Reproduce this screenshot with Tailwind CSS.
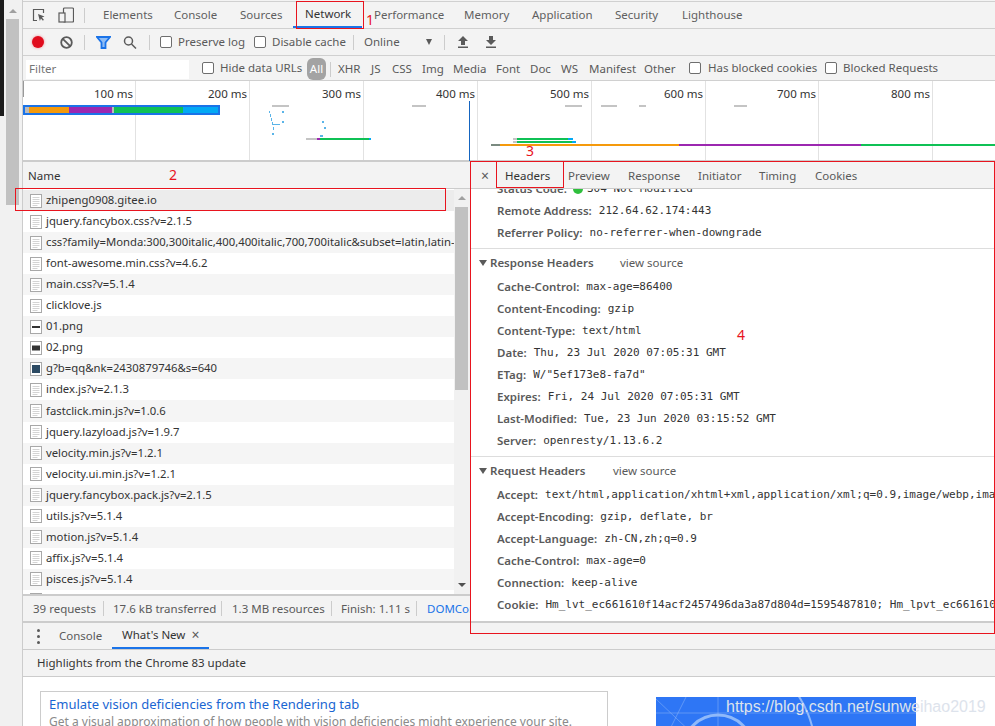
<!DOCTYPE html>
<html lang="en">
<head>
  <meta charset="UTF-8" />
  <title>DevTools Network</title>
  <script src="https://cdn.jsdelivr.net/npm/@tailwindcss/browser@4"></script>
</head>
<body class="bg-[#f3f3f3] font-['Noto_Sans',sans-serif] text-[11.5px] text-[#5a5a5a]">
<div class="relative flex h-[726px] w-[995px] overflow-hidden">

  <!-- page behind devtools -->
  <div class="relative flex w-[22px] shrink-0 bg-[#f1f1f1]">
    <div class="h-[116px] w-[4px] bg-[#1c1c1c]"></div>
    <div class="ml-[2px] flex w-[13px] flex-col items-center">
      <div class="mt-[9px] h-0 w-0 border-x-[4px] border-b-[4px] border-x-transparent border-b-[#a0a0a0]"></div>
      <div class="mt-[6px] h-[186px] w-[13px] bg-[#c1c1c1]"></div>
    </div>
  </div>

  <div class="flex w-[973px] flex-col border-l border-[#ccc]">
    <!-- main tabs -->
    <div class="mt-[1px] flex h-[28px] shrink-0 items-center border-y border-[#d0d0d0] text-[#5f5f5f]">
      <svg class="ml-[9px] h-[14px] w-[14px] shrink-0" viewBox="0 0 14 14" fill="none" stroke="#5a5a5a" stroke-width="1.2"><path d="M5 12.5H1.5V1.5h10V5"/><path d="M6 6l6.5 2.6-2.6 1 2 2.2-1 .9-2-2.2-1 2.6z" fill="#5a5a5a" stroke="none"/></svg>
      <svg class="ml-[12px] h-[16px] w-[16px] shrink-0" viewBox="0 0 16 16" fill="none" stroke="#5a5a5a" stroke-width="1.2"><rect x="5.5" y="1" width="10" height="14" rx="1"/><rect x="1" y="6" width="6" height="9" fill="#f3f3f3"/></svg>
      <div class="ml-[10px] mr-[6px] h-[15px] w-px shrink-0 bg-[#ccc]"></div>
      <div class="flex h-full items-center">
        <span class="ml-[12px] w-[71px]">Elements</span>
        <span class="w-[66px]">Console</span>
        <span class="w-[53px]">Sources</span>
        <span class="mr-[12px] flex h-full w-[69px] items-center border-b-2 border-[#1a73e8] pl-[12px] text-[#333]">Network</span>
        <span class="w-[90px]">Performance</span>
        <span class="w-[68px]">Memory</span>
        <span class="w-[83px]">Application</span>
        <span class="w-[67px]">Security</span>
        <span>Lighthouse</span>
      </div>
    </div>

    <!-- record row -->
    <div class="flex h-[27px] shrink-0 items-center border-b border-[#d0d0d0]">
      <div class="ml-[9px] h-[12px] w-[12px] shrink-0 rounded-full bg-[#e00b1c] shadow-[0_0_3px_#f08a90]"></div>
      <svg class="ml-[16px] h-[13px] w-[13px] shrink-0" viewBox="0 0 13 13" fill="none" stroke="#5a5a5a" stroke-width="1.8"><circle cx="6.5" cy="6.5" r="5.3"/><path d="M2.8 2.8l7.4 7.4"/></svg>
      <div class="ml-[11px] h-[15px] w-px bg-[#ccc]"></div>
      <svg class="ml-[11px] h-[13px] w-[15px] shrink-0" viewBox="0 0 15 13" fill="none" stroke="#1a73e8" stroke-width="1.8"><path d="M1 1h13L9.5 6.5V12h-4V6.5z" fill="#8fbdf5"/></svg>
      <svg class="ml-[12px] h-[13px] w-[14px] shrink-0" viewBox="0 0 14 13" fill="none" stroke="#5a5a5a" stroke-width="1.5"><circle cx="5.5" cy="5" r="4"/><path d="M8.5 8l4.5 4.5"/></svg>
      <div class="ml-[12px] h-[15px] w-px bg-[#ccc]"></div>
      <label class="ml-[10px] flex items-center"><span class="h-[12px] w-[12px] rounded-[2px] border border-[#6e6e6e] bg-white"></span><span class="ml-[6px] w-[76px]">Preserve log</span></label>
      <span class="h-[12px] w-[12px] rounded-[2px] border border-[#6e6e6e] bg-white"></span><span class="ml-[6px] w-[81px]">Disable cache</span>
      <div class="h-[15px] w-px bg-[#ccc]"></div>
      <span class="ml-[10px] w-[62px]">Online</span>
      <div class="h-0 w-0 border-x-[3.5px] border-t-[6px] border-x-transparent border-t-[#5a5a5a]"></div>
      <div class="ml-[12px] h-[15px] w-px bg-[#ccc]"></div>
      <svg class="ml-[12px] h-[12px] w-[12px] shrink-0" viewBox="0 0 12 12" fill="#5a5a5a"><path d="M6 0l5 5H8v4H4V5H1zM1 10.5h10V12H1z"/></svg>
      <svg class="ml-[16px] h-[12px] w-[12px] shrink-0" viewBox="0 0 12 12" fill="#5a5a5a"><path d="M4 0h4v4h3L6 9 1 4h3zM1 10.5h10V12H1z"/></svg>
    </div>

    <!-- filter row -->
    <div class="flex h-[25px] shrink-0 items-center border-b border-[#d0d0d0] pt-[2px]">
      <div class="ml-[3px] flex h-[19px] w-[163px] items-center bg-white pl-[3px] text-[#757575]">Filter</div>
      <span class="ml-[13px] mt-[-3px] h-[12px] w-[12px] rounded-[2px] border border-[#6e6e6e] bg-white"></span><span class="ml-[6px] mt-[-3px] w-[87px]">Hide data URLs</span>
      <span class="flex h-[22px] w-[19px] items-center justify-center rounded-[6px] bg-[#a3a3a3] text-white">All</span>
      <div class="ml-[4px] mr-[7px] h-[15px] w-px bg-[#ccc]"></div>
      <span class="w-[33px]">XHR</span><span class="w-[21px]">JS</span><span class="w-[30px]">CSS</span><span class="w-[31px]">Img</span><span class="w-[43px]">Media</span><span class="w-[34px]">Font</span><span class="w-[31px]">Doc</span><span class="w-[28px]">WS</span><span class="w-[55px]">Manifest</span><span class="w-[45px]">Other</span>
      <span class="mt-[-3px] h-[12px] w-[12px] rounded-[2px] border border-[#6e6e6e] bg-white"></span><span class="ml-[7px] mt-[-3px] w-[117px]">Has blocked cookies</span>
      <span class="mt-[-3px] h-[12px] w-[12px] rounded-[2px] border border-[#6e6e6e] bg-white"></span><span class="ml-[6px] mt-[-3px]">Blocked Requests</span>
    </div>

    <!-- overview, a canvas of timings -->
    <div class="relative h-[81px] shrink-0 border-b-2 border-[#ccc] bg-white text-[#333]">
      <div id="ticks"></div>
      <div class="absolute left-0 top-0 h-[16px] w-px bg-[#999]"></div>
      <div class="absolute left-0 top-[24px] flex h-[10px] w-[197px] border-2 border-[#1a73e8]">
        <i class="w-[4px] bg-[#bbb]"></i><i class="w-[40px] bg-[#f59a0c]"></i><i class="w-[43px] bg-[#9c27b0]"></i><i class="w-[2px] bg-[#bbb]"></i><i class="w-[69px] bg-[#0fc155]"></i><i class="flex-1 bg-[#03a9f4]"></i>
      </div>
      <div id="marks"></div>
      <div class="absolute left-[446px] top-[20px] h-[60px] w-px bg-[#1565c0]"></div>
    </div>

    <!-- split -->
    <div class="flex h-[461px] shrink-0 border-b-2 border-[#ccc]">
      <div class="flex w-[447px] shrink-0 flex-col">
        <div class="flex h-[27px] shrink-0 items-center border-b border-[#ccc] bg-[#f3f3f3] pl-[5px] pt-[2px] text-[#333]">Name</div>
        <div class="flex min-h-0 flex-1 bg-white">
          <div id="rows" class="h-full w-[431px] overflow-hidden pt-[1px] text-[11.3px] text-[#333]"></div>
          <div class="relative w-[16px] bg-[#f1f1f1]">
            <div class="absolute left-[4px] top-[7px] h-0 w-0 border-x-[4px] border-b-[4px] border-x-transparent border-b-[#a0a0a0]"></div>
            <div class="absolute left-[1px] top-[18px] h-[183px] w-[13px] bg-[#c1c1c1]"></div>
            <div class="absolute bottom-[7px] left-[4px] h-0 w-0 border-x-[4px] border-t-[4px] border-x-transparent border-t-[#505050]"></div>
          </div>
        </div>
        <div class="flex h-[27px] shrink-0 items-center overflow-hidden border-t-2 border-[#ccc] whitespace-nowrap">
          <span class="ml-[10px] w-[70px] shrink-0">39 requests</span><i class="h-[15px] w-px shrink-0 bg-[#ccc]"></i>
          <span class="ml-[9px] w-[108px] shrink-0">17.6 kB transferred</span><i class="h-[15px] w-px shrink-0 bg-[#ccc]"></i>
          <span class="ml-[10px] w-[99px] shrink-0">1.3 MB resources</span><i class="h-[15px] w-px shrink-0 bg-[#ccc]"></i>
          <span class="ml-[9px] w-[75px] shrink-0">Finish: 1.11 s</span><i class="h-[15px] w-px shrink-0 bg-[#ccc]"></i>
          <span class="ml-[10px] shrink-0 text-[#1a73e8]">DOMContentLoaded</span>
        </div>
      </div>

      <div class="flex min-w-0 flex-1 flex-col border-l border-[#ccc]">
        <div class="relative z-10 flex h-[27px] shrink-0 items-center border-b border-[#ccc] bg-[#f3f3f3] pt-[2px]">
          <span class="ml-[10px] w-[24px] text-[14px] leading-none">×</span>
          <span class="w-[63px] text-[#333]">Headers</span>
          <span class="w-[60px]">Preview</span>
          <span class="w-[70px]">Response</span>
          <span class="w-[61px]">Initiator</span>
          <span class="w-[56px]">Timing</span>
          <span>Cookies</span>
        </div>
        <div id="headers" class="min-h-0 flex-1 overflow-hidden whitespace-nowrap bg-white"></div>
      </div>
    </div>

    <!-- drawer -->
    <div class="flex h-[27px] shrink-0 items-center border-b border-[#ccc]">
      <div class="ml-[14px] flex w-[4px] shrink-0 flex-col gap-[3px]"><i class="h-[3px] w-[3px] rounded-full bg-[#5a5a5a]"></i><i class="h-[3px] w-[3px] rounded-full bg-[#5a5a5a]"></i><i class="h-[3px] w-[3px] rounded-full bg-[#5a5a5a]"></i></div>
      <span class="ml-[18px] w-[53px]">Console</span>
      <span class="flex h-full items-center border-b-2 border-[#1a73e8] pl-[10px] pr-[10px] text-[#333]">What's New<span class="ml-[6px] text-[14px] leading-none text-[#5a5a5a]">×</span></span>
    </div>
    <div class="flex h-[27px] shrink-0 items-center border-b border-[#ccc] pl-[14px] text-[#333]">Highlights from the Chrome 83 update</div>
    <div class="relative min-h-0 flex-1 overflow-hidden bg-white">
      <div class="ml-[17px] mt-[14px] h-[60px] w-[568px] border border-[#ccc] pl-[8px]">
        <div class="text-[13px] leading-[24px] text-[#1a66d2]">Emulate vision deficiencies from the Rendering tab</div>
        <div class="whitespace-nowrap text-[12px] leading-[12px] text-[#8a8a8a]">Get a visual approximation of how people with vision deficiencies might experience your site.</div>
      </div>
      <div class="absolute left-[633px] top-[20px] h-[40px] w-[260px] overflow-hidden bg-[#2e76f5]">
        <svg class="h-full w-full" viewBox="0 0 260 40" fill="none" stroke="#8fb9fa"><circle cx="62" cy="53" r="35" stroke-width="3"/><circle cx="62" cy="53" r="97" stroke-width="2"/><path d="M0 2L40 40M30 0L10 40M62 0v40M0 16h260" stroke-width="1" opacity=".5"/></svg>
      </div>
    </div>
  </div>

  <!-- annotations drawn on the screenshot -->
  <div class="pointer-events-none absolute left-[296px] top-[1px] h-[28px] w-[68px] border border-[#e8141e]"></div>
  <div class="pointer-events-none absolute left-[15px] top-[188px] h-[23px] w-[431px] border border-[#e8141e]"></div>
  <div class="pointer-events-none absolute left-[496px] top-[161px] z-20 h-[27px] w-[68px] border border-[#e8141e]"></div>
  <div class="pointer-events-none absolute left-[470px] top-[161px] z-20 h-[473px] w-[525px] border border-[#e8141e]"></div>
  <span class="absolute left-[366px] top-[9px] text-[14px] text-[#e8141e]">1</span>
  <span class="absolute left-[169px] top-[164px] text-[14px] text-[#e8141e]">2</span>
  <span class="absolute left-[526px] top-[140px] text-[14px] text-[#e8141e]">3</span>
  <span class="absolute left-[737px] top-[324px] text-[14px] text-[#e8141e]">4</span>
  <span class="absolute left-[726px] top-[697px] font-['Liberation_Sans',sans-serif] text-[16px] leading-[20px] text-[#dde3ec]">https://blog.csdn.net/sunweihao2019</span>
</div>

<script>
  // offsets are from the left edge of the overview
  const ticks = [
    [112, "100 ms"], [226, "200 ms"], [340, "300 ms"], [454, "400 ms"],
    [568, "500 ms"], [682, "600 ms"], [795, "700 ms"], [909, "800 ms"],
  ];
  document.getElementById("ticks").innerHTML = ticks.map(([x, label]) =>
    `<div class="absolute top-0 h-[79px] w-px bg-[#e2e2e2]" style="left:${x}px"></div>
     <span class="absolute top-[5px] text-right leading-[16px] w-[60px]" style="left:${x - 62}px">${label}</span>`
  ).join("");

  const marks = [
    // [left, top, width, height, colour]
    [249, 24, 17, 2, "#c4c4c4"], [389, 24, 14, 2, "#c4c4c4"], [542, 24, 17, 2, "#c4c4c4"],
    [578, 24, 16, 2, "#c4c4c4"], [616, 24, 7, 2, "#c4c4c4"], [711, 24, 13, 2, "#c4c4c4"],
    [246, 30, 1, 2, "#5ab4e8"], [259, 30, 2, 2, "#5ab4e8"], [247, 33, 1, 3, "#5ab4e8"], [248, 37, 1, 3, "#5ab4e8"],
    [249, 41, 1, 3, "#5ab4e8"], [249, 43, 8, 1, "#5ab4e8"], [259, 40, 2, 2, "#5ab4e8"], [250, 46, 1, 3, "#5ab4e8"], [249, 52, 2, 2, "#5ab4e8"],
    [299, 40, 2, 2, "#5ab4e8"], [301, 46, 2, 2, "#5ab4e8"], [297, 54, 3, 2, "#5ab4e8"],
    [283, 57, 11, 2, "#c4c4c4"], [294, 57, 3, 2, "#9c27b0"], [297, 57, 49, 2, "#0fc155"], [346, 57, 2, 2, "#03a9f4"],
    [490, 57, 4, 2, "#c4c4c4"], [494, 57, 51, 2, "#0fc155"], [545, 57, 5, 2, "#03a9f4"],
    [490, 60, 4, 2, "#c4c4c4"], [494, 60, 55, 2, "#0fc155"], [549, 60, 4, 2, "#03a9f4"],
    [468, 63, 9, 2, "#7a8a80"], [477, 63, 179, 2, "#f59a0c"], [656, 63, 182, 2, "#9c27b0"], [838, 63, 135, 2, "#0fc155"],
  ];
  document.getElementById("marks").innerHTML = marks.map(([l, t, w, h, c]) =>
    `<i class="absolute" style="left:${l}px;top:${t}px;width:${w}px;height:${h}px;background:${c}"></i>`
  ).join("");

  const docIcon = `<svg class="h-[14px] w-[12px] shrink-0" viewBox="0 0 12 14"><rect x=".5" y=".5" width="11" height="13" fill="#fff" stroke="#a8a8a8"/><path d="M2.5 3.5h7M2.5 5.5h7M2.5 7.5h7M2.5 9.5h7M2.5 11.5h5" stroke="#d4d4d4"/></svg>`;
  const imgIcon = (h, fill) => `<svg class="h-[14px] w-[12px] shrink-0" viewBox="0 0 12 14"><rect x=".5" y=".5" width="11" height="13" fill="#fff" stroke="#a8a8a8"/><rect x="2" y="${7 - h / 2}" width="8" height="${h}" fill="${fill}"/></svg>`;
  const files = [
    ["zhipeng0908.gitee.io", docIcon], ["jquery.fancybox.css?v=2.1.5", docIcon],
    ["css?family=Monda:300,300italic,400,400italic,700,700italic&amp;subset=latin,latin-ext", docIcon],
    ["font-awesome.min.css?v=4.6.2", docIcon], ["main.css?v=5.1.4", docIcon], ["clicklove.js", docIcon],
    ["01.png", imgIcon(2, "#333")], ["02.png", imgIcon(5, "#333")], ["g?b=qq&amp;nk=2430879746&amp;s=640", imgIcon(8, "#2c4a63")],
    ["index.js?v=2.1.3", docIcon], ["fastclick.min.js?v=1.0.6", docIcon], ["jquery.lazyload.js?v=1.9.7", docIcon],
    ["velocity.min.js?v=1.2.1", docIcon], ["velocity.ui.min.js?v=1.2.1", docIcon], ["jquery.fancybox.pack.js?v=2.1.5", docIcon],
    ["utils.js?v=5.1.4", docIcon], ["motion.js?v=5.1.4", docIcon], ["affix.js?v=5.1.4", docIcon], ["pisces.js?v=5.1.4", docIcon],
    ["", docIcon],
  ];
  document.getElementById("rows").innerHTML = files.map(([name, icon], i) => {
    const bg = i === 0 ? "bg-[#ececec]" : i % 2 ? "bg-white" : "bg-[#f5f5f5]";
    return `<div class="flex h-[21.05px] items-center overflow-hidden whitespace-nowrap pl-[7px] ${bg}">${icon}<span class="ml-[4px]">${name}</span></div>`;
  }).join("");

  const row = (k, v) => `<div class="flex h-[22px] items-center pl-[26px]"><b class="font-semibold text-[#5a5a5a]">${k}:</b><span class="ml-[7px] font-['DejaVu_Sans_Mono',monospace] text-[11px] text-[#333]">${v}</span></div>`;
  const section = (title, left, rows) => `<div class="border-t border-[#ddd] pt-[3px] pb-[4px]"><div class="mb-[2px] flex h-[22px] items-center pl-[8px]"><i class="mr-[3px] h-0 w-0 border-x-[4px] border-t-[6px] border-x-transparent border-t-[#5a5a5a]"></i><b class="font-semibold">${title}</b><span class="absolute" style="left:${left}px">view source</span></div>${rows.map(r => row(...r)).join("")}</div>`;
  document.getElementById("headers").innerHTML = `<div class="mt-[-11px]">
    <div class="flex h-[22px] items-center pl-[26px]"><b class="font-semibold">Status Code:</b><i class="ml-[6px] h-[10px] w-[10px] rounded-full bg-[#2fbf3c]"></i><span class="ml-[4px] font-['DejaVu_Sans_Mono',monospace] text-[11px] text-[#333]">304 Not Modified</span></div>
    ${row("Remote Address", "212.64.62.174:443")}
    <div class="pb-[4px]">${row("Referrer Policy", "no-referrer-when-downgrade")}</div>
    ${section("Response Headers", 620, [
      ["Cache-Control", "max-age=86400"], ["Content-Encoding", "gzip"], ["Content-Type", "text/html"],
      ["Date", "Thu, 23 Jul 2020 07:05:31 GMT"], ["ETag", 'W/"5ef173e8-fa7d"'], ["Expires", "Fri, 24 Jul 2020 07:05:31 GMT"],
      ["Last-Modified", "Tue, 23 Jun 2020 03:15:52 GMT"], ["Server", "openresty/1.13.6.2"],
    ])}
    ${section("Request Headers", 613, [
      ["Accept", "text/html,application/xhtml+xml,application/xml;q=0.9,image/webp,image/apng,*/*;q=0.8"],
      ["Accept-Encoding", "gzip, deflate, br"], ["Accept-Language", "zh-CN,zh;q=0.9"], ["Cache-Control", "max-age=0"],
      ["Connection", "keep-alive"], ["Cookie", "Hm_lvt_ec661610f14acf2457496da3a87d804d=1595487810; Hm_lpvt_ec661610f14acf2457496da3a87d804d"],
      ["Host", "zhipeng0908.gitee.io"],
    ])}
  </div>`;
</script>
</body>
</html>
